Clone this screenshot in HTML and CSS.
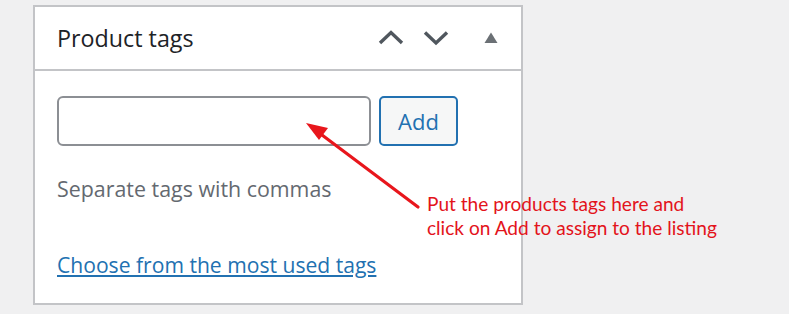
FILE: index.html
```html
<!DOCTYPE html>
<html lang="en">
<head>
  <meta charset="UTF-8">
  <meta name="viewport" content="width=device-width, initial-scale=1.0">
  <title>Product tags</title>
  <link rel="stylesheet" href="styles.css">
</head>
<body>
  <div class="postbox">
    <div class="postbox-header">
      <h2 class="hndle">Product tags</h2>
      <div class="handle-actions">
        <button class="handle-btn" aria-label="Move up">
          <svg width="26" height="16" viewBox="0 0 26 16"><polyline points="2,13 13,2.5 24,13" fill="none" stroke="#50575e" stroke-width="3.4"/></svg>
        </button>
        <button class="handle-btn" aria-label="Move down">
          <svg width="26" height="16" viewBox="0 0 26 16"><polyline points="2,2.5 13,13 24,2.5" fill="none" stroke="#50575e" stroke-width="3.4"/></svg>
        </button>
        <button class="handle-btn toggle" aria-label="Toggle panel">
          <svg width="14" height="12" viewBox="0 0 14 12"><polygon points="0.5,11 7,0.5 13.5,11" fill="#6b7075"/></svg>
        </button>
      </div>
    </div>
    <div class="inside">
      <div class="tag-row">
        <input class="newtag" type="text" aria-label="Add new tag">
        <button class="tagadd">Add</button>
      </div>
      <p class="howto">Separate tags with commas</p>
      <p class="tagcloud-link"><a href="#">Choose from the most used tags</a></p>
    </div>
  </div>

  <svg class="callout-arrow" width="789" height="314" viewBox="0 0 789 314">
    <line x1="418" y1="207" x2="318" y2="132" stroke="#e8161c" stroke-width="3.2" stroke-linecap="round"/>
    <polygon points="306,123 328,128 319,140" fill="#e8161c"/>
  </svg>
  <p class="callout">Put the products tags here and<br>click on Add to assign to the listing</p>
</body>
</html>
```

FILE: styles.css
```css
body {
  margin: 0;
  padding: 5px 0 0 33px;
  background-color: #f0f0f1;
  font-family: "Open Sans", "Noto Sans", sans-serif;
  color: #1d2327;
}
.postbox {
  box-sizing: border-box;
  width: 490px;
  height: 300px;
  background: #fff;
  border: 2px solid #c3c4c7;
}
.postbox-header {
  display: flex;
  align-items: center;
  justify-content: space-between;
  height: 62px;
  border-bottom: 2px solid #c3c4c7;
  padding-left: 22px;
}
.hndle {
  margin: 0;
  font-size: 23.3px;
  font-weight: 400;
  color: #1d2327;
}
.handle-actions {
  display: flex;
  align-items: center;
  margin-right: 8px;
}
.handle-btn {
  display: flex;
  align-items: center;
  justify-content: center;
  width: 45px;
  height: 40px;
  padding: 0;
  border: 0;
  background: none;
}
.handle-btn.toggle {
  margin-left: 10px;
}
.inside {
  padding: 25px 22px 0;
}
.tag-row {
  display: flex;
  gap: 8px;
}
.newtag {
  box-sizing: border-box;
  width: 314px;
  height: 50px;
  border: 2px solid #8c8f94;
  border-radius: 6px;
  background: #fff;
}
.tagadd {
  box-sizing: border-box;
  width: 79px;
  height: 50px;
  border: 2px solid #2271b1;
  border-radius: 5px;
  background: #f6f7f7;
  color: #2271b1;
  font-family: inherit;
  font-size: 22px;
}
.howto {
  margin: 28px 0 0;
  font-size: 21.4px;
  color: #646970;
}
.tagcloud-link {
  margin: 47px 0 0;
  font-size: 21.1px;
}
.tagcloud-link a {
  color: #2271b1;
}
.callout-arrow {
  position: absolute;
  left: 0;
  top: 0;
  pointer-events: none;
}
.callout {
  position: absolute;
  left: 427px;
  top: 192px;
  margin: 0;
  font-family: Lato, sans-serif;
  font-size: 19.1px;
  line-height: 24px;
  color: #e3131b;
}
```
